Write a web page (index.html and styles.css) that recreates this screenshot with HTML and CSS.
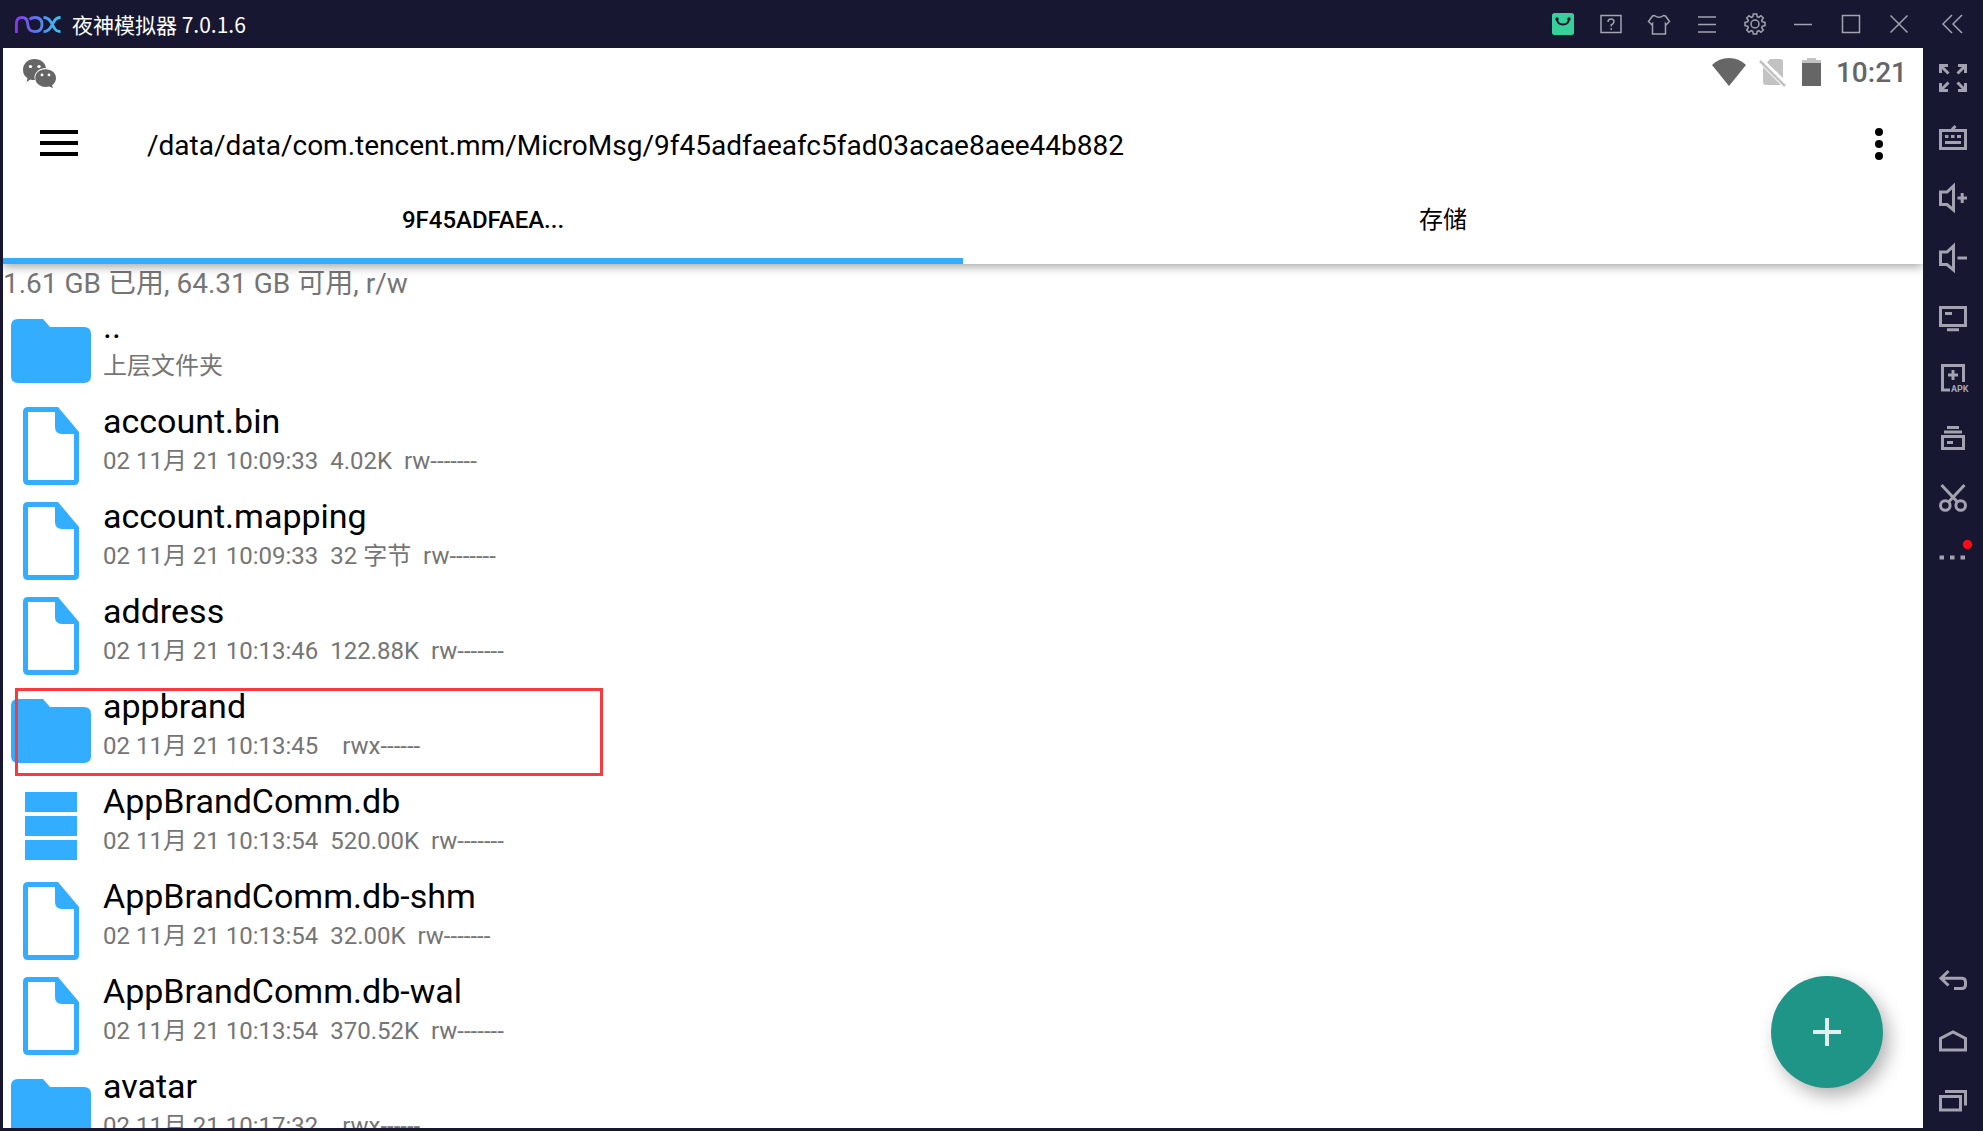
FILE: index.html
```html
<!DOCTYPE html>
<html lang="zh-CN">
<head>
<meta charset="utf-8">
<title>夜神模拟器 7.0.1.6</title>
<link rel="stylesheet" href="styles.css">
</head>
<body>
<svg class="defs" aria-hidden="true">
  <symbol id="folder" viewBox="0 0 80 64"><path d="M7 0H32L39 8H73Q80 8 80 15V57Q80 64 73 64H7Q0 64 0 57V7Q0 0 7 0Z"/></symbol>
  <symbol id="file" viewBox="0 0 56 78"><path fill-rule="evenodd" d="M5 0H35L56 25V73Q56 78 51 78H5Q0 78 0 73V5Q0 0 5 0ZM5 5V73H51V27H39Q32 27 32 20V5Z"/></symbol>
  <symbol id="database" viewBox="0 0 52 68"><path d="M0 0H52V20H0ZM0 24H52V44H0ZM0 48H52V68H0Z"/></symbol>
</svg>
<div class="window">
  <header class="titlebar">
    <svg class="logo" width="46" height="20" viewBox="0 0 46 20" fill="none">
      <defs><linearGradient id="nox" x1="0" x2="46" y1="0" y2="0" gradientUnits="userSpaceOnUse"><stop offset="0" stop-color="#8a35e8"/><stop offset=".5" stop-color="#5b7cf0"/><stop offset="1" stop-color="#2fd0f5"/></linearGradient></defs>
      <path stroke="url(#nox)" stroke-width="2.8" d="M1.400 19V9.500Q1.400 3.500 7 3.500Q12.300 3.500 12.600 9.500Q13 17.600 20 17.600Q27 17.400 27 10.500T20 3.500Q16.500 3.500 14.500 5.500M28.500 3.500Q33 3.500 35.500 7.500L39 13.500Q41 17.600 45.500 17.600M45.500 3.500Q41 3.500 39 7.500L35.500 13.500Q33 17.600 28.500 17.600"/>
    </svg>
    <h1 class="app-name">夜神模拟器 7.0.1.6</h1>
    <nav class="window-buttons" aria-label="窗口">
      <button type="button" aria-label="应用中心"><svg width="24" height="24" viewBox="0 0 24 24"><rect x="1" y="1" width="22" height="22" rx="2.500" fill="#37d09a"/><path d="M6 7Q6.500 12.500 12 12.500T18 7" fill="none" stroke="#171731" stroke-width="2"/><circle cx="6" cy="7" r="1.700" fill="#171731"/><circle cx="18" cy="7" r="1.700" fill="#171731"/></svg></button>
      <button type="button" aria-label="帮助"><svg class="line" width="24" height="24" viewBox="0 0 24 24"><rect x="2" y="3.500" width="20" height="17"/><path d="M9 10Q9 7 12 7T15 9.800Q15 11.500 12.200 13V14.500M12.200 16.300V18"/></svg></button>
      <button type="button" aria-label="主题"><svg class="line" width="24" height="24" viewBox="0 0 24 24"><path d="M7.500 3.500Q12 7 16.500 3.500L18.500 4L22.500 9.500L19.500 12.500L18.500 11.500V22H5.500V11.500L4.500 12.500L1.500 9.500L5.500 4Z"/></svg></button>
      <button type="button" aria-label="菜单"><svg class="line" width="24" height="24" viewBox="0 0 24 24"><path d="M3 5H21M3 12.500H21M3 20H21"/></svg></button>
      <button type="button" aria-label="设置"><svg class="line" width="24" height="24" viewBox="0 0 24 24"><circle cx="12" cy="12" r="4"/><path d="M10.300 2H13.700L14.200 4.700L15.700 5.300L18 3.700L20.300 6L18.700 8.300L19.300 9.800L22 10.300V13.700L19.300 14.200L18.700 15.700L20.300 18L18 20.300L15.700 18.700L14.200 19.300L13.700 22H10.300L9.800 19.300L8.300 18.700L6 20.300L3.700 18L5.300 15.700L4.700 14.200L2 13.700V10.300L4.700 9.800L5.300 8.300L3.700 6L6 3.700L8.300 5.300L9.800 4.700Z"/></svg></button>
      <button type="button" aria-label="最小化"><svg class="line" width="24" height="24" viewBox="0 0 24 24"><path d="M3 12.500H21"/></svg></button>
      <button type="button" aria-label="最大化"><svg class="line" width="24" height="24" viewBox="0 0 24 24"><rect x="3.500" y="3.500" width="17" height="17"/></svg></button>
      <button type="button" aria-label="关闭"><svg class="line" width="24" height="24" viewBox="0 0 24 24"><path d="M3.500 3.500L20.500 20.500M20.500 3.500L3.500 20.500"/></svg></button>
      <button type="button" class="collapse" aria-label="收起"><svg class="line" width="24" height="24" viewBox="0 0 24 24"><path d="M11 3L2 12L11 21M21 3L12 12L21 21"/></svg></button>
    </nav>
  </header>

  <main class="screen">
    <div class="statusbar">
      <svg class="wechat" width="33" height="29" viewBox="0 0 33 31" preserveAspectRatio="none" fill="#666"><path d="M11.500 0C18 0 22.500 4.500 23 9.500C16.500 9.500 11.500 14 11.500 19.500Q11.500 21 12 22.500Q9.500 22.700 7.500 22L3.500 24.500L4.500 20.500C1.500 18.500 0 15.500 0 11.500C0 5 5 0 11.500 0Z"/><path d="M22.500 11C28.500 11 33 15 33 20.300Q33 25 29 28L30 31L26 29.300Q24.500 29.800 22.500 29.800C16.500 29.800 12.300 25.500 12.300 20.300S16.500 11 22.500 11Z"/><g fill="#fff"><circle cx="7.500" cy="8" r="1.700"/><circle cx="16" cy="8" r="1.700"/><circle cx="19" cy="17" r="1.400"/><circle cx="26" cy="17" r="1.400"/></g></svg>
      <div class="status-icons">
        <svg width="34" height="30" viewBox="0 0 34 30"><path fill="#666" d="M0 7Q7 0 17 0T34 7L17 28Z"/></svg>
        <svg width="28" height="30" viewBox="0 0 28 30"><path fill="#c2c2c2" d="M10 1H20Q23 1 23 4V20L7 4.500ZM3 9L21 27H6Q3 27 3 24Z"/><path stroke="#c2c2c2" stroke-width="2.500" d="M0 3L25 28"/></svg>
        <svg width="20" height="30" viewBox="0 0 20 30"><path fill="#c2c2c2" d="M5 0H14V2H19V6H0V2H5Z"/><path fill="#666" d="M0 5H19V28H0Z"/></svg>
        <time class="clock">10:21</time>
      </div>
    </div>

    <div class="appbar">
      <div class="toolbar">
        <button type="button" class="icon-button" aria-label="导航菜单"><svg width="38" height="28" viewBox="0 0 38 28"><path d="M0 0H38V4H0ZM0 11H38V15H0ZM0 22H38V26H0Z"/></svg></button>
        <p class="path">/data/data/com.tencent.mm/MicroMsg/9f45adfaeafc5fad03acae8aee44b882</p>
        <button type="button" class="icon-button" aria-label="更多选项"><svg width="8" height="32" viewBox="0 0 8 32"><circle cx="4" cy="4" r="4"/><circle cx="4" cy="16" r="4"/><circle cx="4" cy="28" r="4"/></svg></button>
      </div>
      <div class="tabs" role="tablist">
        <button type="button" class="tab active" role="tab" aria-selected="true">9F45ADFAEA...</button>
        <button type="button" class="tab" role="tab" aria-selected="false">存储</button>
      </div>
    </div>

    <div class="listing">
      <p class="usage">1.61 GB 已用, 64.31 GB 可用, r/w</p>
      <ul class="files">
        <li><a class="file" href="#"><span class="icon"><svg width="80" height="64"><use href="#folder"/></svg></span><span class="text"><span class="name">..</span><span class="meta">上层文件夹</span></span></a></li>
        <li><a class="file" href="#"><span class="icon"><svg width="56" height="78"><use href="#file"/></svg></span><span class="text"><span class="name">account.bin</span><span class="meta">02 11月 21 10:09:33  4.02K  rw-------</span></span></a></li>
        <li><a class="file" href="#"><span class="icon"><svg width="56" height="78"><use href="#file"/></svg></span><span class="text"><span class="name">account.mapping</span><span class="meta">02 11月 21 10:09:33  32 字节  rw-------</span></span></a></li>
        <li><a class="file" href="#"><span class="icon"><svg width="56" height="78"><use href="#file"/></svg></span><span class="text"><span class="name">address</span><span class="meta">02 11月 21 10:13:46  122.88K  rw-------</span></span></a></li>
        <li><a class="file marked" href="#"><span class="icon"><svg width="80" height="64"><use href="#folder"/></svg></span><span class="text"><span class="name">appbrand</span><span class="meta">02 11月 21 10:13:45    rwx------</span></span></a></li>
        <li><a class="file" href="#"><span class="icon"><svg width="52" height="68"><use href="#database"/></svg></span><span class="text"><span class="name">AppBrandComm.db</span><span class="meta">02 11月 21 10:13:54  520.00K  rw-------</span></span></a></li>
        <li><a class="file" href="#"><span class="icon"><svg width="56" height="78"><use href="#file"/></svg></span><span class="text"><span class="name">AppBrandComm.db-shm</span><span class="meta">02 11月 21 10:13:54  32.00K  rw-------</span></span></a></li>
        <li><a class="file" href="#"><span class="icon"><svg width="56" height="78"><use href="#file"/></svg></span><span class="text"><span class="name">AppBrandComm.db-wal</span><span class="meta">02 11月 21 10:13:54  370.52K  rw-------</span></span></a></li>
        <li><a class="file" href="#"><span class="icon"><svg width="80" height="64"><use href="#folder"/></svg></span><span class="text"><span class="name">avatar</span><span class="meta">02 11月 21 10:17:32    rwx------</span></span></a></li>
      </ul>
    </div>
    <button type="button" class="fab" aria-label="新建"><svg width="28" height="28" viewBox="0 0 28 28"><path fill="#e0f2f0" d="M12 0H16V12H28V16H16V28H12V16H0V12H12Z"/></svg></button>
  </main>

  <aside class="sidebar">
    <div class="tools">
      <button type="button" aria-label="全屏"><svg width="28" height="28" viewBox="0 0 28 28"><path d="M1.500 9V1.500H9M2 2L9.500 9.500M19 1.500H26.500V9M26 2L18.500 9.500M1.500 19V26.500H9M2 26L9.500 18.500M26.500 19V26.500H19M26 26L18.500 18.500"/></svg></button>
      <button type="button" aria-label="键盘控制"><svg width="28" height="28" viewBox="0 0 28 28"><path d="M1.500 6.500H26.500V24.500H1.500ZM6 12.500H9.500M12 12.500H15.500M18 12.500H22M6 18.500H22M13 5.500L16.500 2"/></svg></button>
      <button type="button" aria-label="音量加"><svg width="28" height="28" viewBox="0 0 28 28"><path d="M1.500 8H8L14.500 2V26L8 20.500H1.500ZM18.500 14H28M23.200 9V19"/></svg></button>
      <button type="button" aria-label="音量减"><svg width="28" height="28" viewBox="0 0 28 28"><path d="M1.500 8H8L14.500 2V26L8 20.500H1.500ZM18.500 14H28"/></svg></button>
      <button type="button" aria-label="虚拟屏幕"><svg width="28" height="28" viewBox="0 0 28 28"><path d="M1.500 3.500H26.500V21.500H1.500ZM8 25.800H20M6 9.500H13"/></svg></button>
      <button type="button" aria-label="安装 APK"><svg width="28" height="28" viewBox="0 0 28 28"><path d="M11 26H3.500V1.500H24.500V18M9 11H19M14 6V16"/><text x="12" y="28">APK</text></svg></button>
      <button type="button" aria-label="多开管理"><svg width="28" height="28" viewBox="0 0 28 28"><path d="M8 3.500H20M5 8H23M3.500 12.500H24.500V24.500H3.500ZM8 18.500H14"/></svg></button>
      <button type="button" aria-label="截图"><svg width="28" height="28" viewBox="0 0 28 28"><path d="M2.500 1L18 17.500M25.500 1L10 17.500"/><circle cx="6.300" cy="21.500" r="4.800"/><circle cx="21.700" cy="21.500" r="4.800"/></svg></button>
      <button type="button" aria-label="更多"><svg width="28" height="28" viewBox="0 0 28 28"><path stroke-width="4" d="M.5 13.500H5M11 13.500H15.500M21.500 13.500H26"/><circle class="alert" cx="28.500" cy=".5" r="4.700"/></svg></button>
    </div>
    <div class="tools">
      <button type="button" aria-label="返回"><svg width="28" height="28" viewBox="0 0 28 28"><path d="M9.500 4L2 11.300L9.500 18.500M2 11.300H22.500Q26.500 11.300 26.500 15V18Q26.500 21.500 22.500 21.500H15"/></svg></button>
      <button type="button" aria-label="主页"><svg width="28" height="28" viewBox="0 0 28 28"><path d="M1.500 23V11.500L14 5L26.500 11.500V23Z"/></svg></button>
      <button type="button" aria-label="最近任务"><svg width="28" height="28" viewBox="0 0 28 28"><path d="M1.500 9.500H21.500V23H1.500ZM6 4.500H26.500V18.500"/></svg></button>
    </div>
  </aside>
</div>
</body>
</html>
```

FILE: styles.css
```css
*, *::after { box-sizing: border-box; }

body {
  margin: 0;
  background: #171731;
  color: #000;
  font-family: Roboto, "Noto Sans CJK SC", sans-serif;
}

h1, p, ul { margin: 0; padding: 0; }
ul { list-style: none; }
svg { display: block; flex: none; overflow: visible; }

button {
  display: flex;
  align-items: center;
  justify-content: center;
  margin: 0;
  padding: 0;
  border: 0;
  background: none;
  color: inherit;
  font: inherit;
}

.defs { width: 0; height: 0; position: absolute; }

.window {
  display: grid;
  grid-template: 48px minmax(0, 1fr) / minmax(0, 1fr) 60px;
  height: 100vh;
}

/* Title bar */
.titlebar {
  grid-column: 1 / -1;
  display: flex;
  align-items: center;
  padding-left: 15px;
  color: #fff;
}
.app-name {
  flex: 1;
  margin-left: 11px;
  font: 400 21px/30px "Noto Sans CJK SC", sans-serif;
}
.window-buttons { display: flex; }
.window-buttons button { width: 48px; height: 48px; }
.window-buttons .collapse { width: 60px; }
.line { fill: none; stroke: #a2a2b0; stroke-width: 1.5; }

/* Android screen */
.screen {
  position: relative;
  display: flex;
  flex-direction: column;
  margin: 0 0 3px 3px;
  background: #fff;
  overflow: hidden;
}
.statusbar {
  flex: none;
  display: flex;
  align-items: center;
  justify-content: space-between;
  height: 48px;
  padding: 2px 16px 0 20px;
}
.status-icons { display: flex; align-items: center; gap: 14px; }
.clock { color: #666; font-size: 28px; font-weight: 500; line-height: 32px; }

/* The shadow falls only below the bar */
.appbar {
  flex: none;
  position: relative;
  box-shadow: 0 2px 10px rgba(0, 0, 0, .4);
  clip-path: inset(0 0 -20px 0);
}
.toolbar {
  display: flex;
  align-items: center;
  height: 96px;
  padding: 0 8px 0 20px;
}
.icon-button { width: 72px; height: 72px; }
.path { flex: 1; padding: 3px 0 0 52px; font-size: 28px; line-height: 36px; }
.tabs { display: grid; grid-template-columns: 1fr 1fr; }
.tab {
  height: 72px;
  padding-bottom: 10px;
  border-bottom: 6px solid transparent;
  font-size: 24px;
  line-height: 32px;
}
.tab.active { border-color: #33adff; font-weight: 500; }

/* File list */
.listing { flex: 1; min-height: 0; overflow: hidden; }
.usage { color: #757575; font-size: 28px; line-height: 39px; }
.file {
  position: relative;
  display: flex;
  height: 95px;
  color: inherit;
  text-decoration: none;
}
.icon {
  display: flex;
  align-items: center;
  justify-content: center;
  width: 96px;
  fill: #33adff;
}
.text { display: flex; flex-direction: column; padding-left: 4px; white-space: pre; }
.name { font-size: 34px; line-height: 46px; }
.meta { color: #757575; font-size: 24px; line-height: 34px; }
.marked::after {
  content: "";
  position: absolute;
  left: 12px;
  top: 5px;
  width: 588px;
  height: 88px;
  border: 3px solid #f93a3d;
}

.fab {
  position: absolute;
  right: 40px;
  bottom: 40px;
  width: 112px;
  height: 112px;
  border-radius: 50%;
  background: #1f9588;
  box-shadow: 6px 8px 18px rgba(0, 0, 0, .3);
}

/* Emulator sidebar */
.sidebar { display: flex; flex-direction: column; justify-content: space-between; }
.tools button { width: 60px; height: 60px; }
.tools svg { fill: none; stroke: #a2a2b0; stroke-width: 3; }
.tools text { fill: #a2a2b0; stroke: none; font: 700 9px Roboto, sans-serif; }
.tools .alert { fill: #ff0a14; stroke: none; }
```
